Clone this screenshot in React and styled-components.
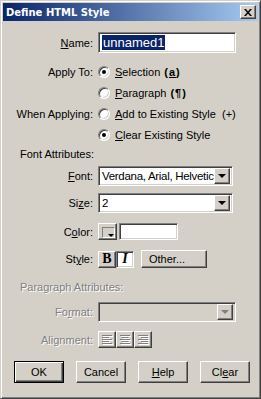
import styled, { createGlobalStyle, css } from "styled-components";

const GlobalStyle = createGlobalStyle`
  html, body {
    margin: 0;
    padding: 0;
    background: #d4d0c8;
  }
  * {
    box-sizing: border-box;
  }
`;

const sunken = css`
  border: 1px solid;
  border-color: #808080 #fff #fff #808080;
  box-shadow: inset 1px 1px 0 #404040, inset -1px -1px 0 #d4d0c8;
`;

const raised = css`
  border: 1px solid;
  border-color: #fff #404040 #404040 #fff;
  box-shadow: inset -1px -1px 0 #808080, inset 1px 1px 0 #d4d0c8;
`;

const Window = styled.div`
  width: 261px;
  height: 399px;
  background: #d4d0c8;
  border: 1px solid;
  border-color: #d4d0c8 #404040 #404040 #d4d0c8;
  box-shadow: inset 1px 1px 0 #fff, inset -1px -1px 0 #808080;
  padding: 2px;
  display: flex;
  flex-direction: column;
  font-family: "Liberation Sans", Arial, sans-serif;
  font-size: 11px;
  color: #000;
`;

const TitleBar = styled.div`
  height: 18px;
  flex-shrink: 0;
  display: flex;
  align-items: center;
  justify-content: space-between;
  padding: 0 2px 0 3px;
  background: linear-gradient(90deg, #0a246a, #a6caf0);
`;

const Title = styled.span`
  color: #fff;
  font-family: "DejaVu Sans", Verdana, sans-serif;
  font-weight: bold;
  font-size: 10px;
`;

const CloseButton = styled.div`
  ${raised};
  width: 16px;
  height: 14px;
  background: #d4d0c8;
  display: flex;
  align-items: center;
  justify-content: center;
`;

const Content = styled.div`
  display: flex;
  flex-direction: column;
`;

const Row = styled.div`
  display: flex;
  align-items: center;
  height: ${(p) => p.$h}px;
  margin-top: ${(p) => p.$top}px;
`;

const Label = styled.div`
  width: 95px;
  padding-right: 5px;
  text-align: right;
  flex-shrink: 0;
  white-space: nowrap;
  color: ${(p) => (p.$disabled ? "#808080" : "#000")};
  text-shadow: ${(p) => (p.$disabled ? "1px 1px 0 #fff" : "none")};
`;

const Heading = styled.div`
  padding-left: 17px;
  white-space: nowrap;
  color: ${(p) => (p.$disabled ? "#808080" : "#000")};
  text-shadow: ${(p) => (p.$disabled ? "1px 1px 0 #fff" : "none")};
`;

const TextField = styled.div`
  ${sunken};
  width: ${(p) => p.$w}px;
  height: ${(p) => p.$h}px;
  margin-left: ${(p) => p.$gap || 0}px;
  background: #fff;
  display: flex;
  align-items: center;
  padding-left: 3px;
`;

const Selected = styled.span`
  background: #0a246a;
  color: #fff;
  font-size: 13px;
  line-height: 15px;
  padding: 0 1px;
`;

const Select = styled.div`
  ${sunken};
  width: ${(p) => p.$w}px;
  height: 20px;
  background: ${(p) => (p.$disabled ? "#d4d0c8" : "#fff")};
  display: flex;
  align-items: center;
  justify-content: space-between;
  padding: 2px;
  font-size: 11.5px;
  letter-spacing: -0.3px;
`;

const SelectText = styled.span`
  padding-left: 1px;
  white-space: nowrap;
  overflow: hidden;
`;

const ArrowButton = styled.div`
  ${raised};
  width: 16px;
  height: 16px;
  flex-shrink: 0;
  background: #d4d0c8;
  display: flex;
  align-items: center;
  justify-content: center;
`;

const Arrow = styled.div`
  width: 0;
  height: 0;
  border-left: 4px solid transparent;
  border-right: 4px solid transparent;
  border-top: 4px solid ${(p) => (p.$disabled ? "#808080" : "#000")};
`;

const RadioLine = styled.label`
  display: flex;
  align-items: center;
  gap: 5px;
  white-space: nowrap;
`;

const RadioCircle = styled.span`
  width: 12px;
  height: 12px;
  border-radius: 50%;
  border: 1px solid;
  border-color: #808080 #fff #fff #808080;
  box-shadow: inset 1px 1px 0 #404040, inset -1px -1px 0 #d4d0c8;
  background: #fff;
  display: flex;
  align-items: center;
  justify-content: center;
  &::after {
    content: "";
    width: 4px;
    height: 4px;
    border-radius: 50%;
    background: ${(p) => (p.$checked ? "#000" : "transparent")};
  }
`;

const Symbol = styled.b`
  font-weight: bold;
  margin-left: 4px;
  letter-spacing: 1px;
`;

const Indent = styled.div`
  width: 95px;
  flex-shrink: 0;
`;

const ColorSwatch = styled.div`
  ${raised};
  width: 19px;
  height: 17px;
  background: #d4d0c8;
  position: relative;
  padding: 3px;
  &::before {
    content: "";
    display: block;
    width: 11px;
    height: 9px;
    border: 1px solid #808080;
    border-right-color: #fff;
    border-bottom-color: #fff;
    background: #d4d0c8;
  }
  &::after {
    content: "";
    position: absolute;
    right: 2px;
    bottom: 2px;
    border-left: 3px solid transparent;
    border-right: 3px solid transparent;
    border-top: 3px solid #000;
  }
`;

const ToolButton = styled.div`
  ${(p) => (p.$pressed ? sunken : raised)};
  width: 18px;
  height: 17px;
  background: ${(p) => (p.$pressed ? "#fff" : "#d4d0c8")};
  display: flex;
  align-items: center;
  justify-content: center;
  font-family: "Liberation Serif", "Times New Roman", serif;
  font-weight: bold;
  font-size: 14px;
  font-style: ${(p) => (p.$italic ? "italic" : "normal")};
`;

const OtherButton = styled.div`
  ${raised};
  width: 66px;
  height: 18px;
  margin-left: 7px;
  background: #d4d0c8;
  display: flex;
  align-items: center;
  padding-left: 7px;
`;

const AlignGroup = styled.div`
  display: flex;
`;

const ButtonRow = styled.div`
  display: flex;
  gap: 12px;
  padding-left: 11px;
  margin-top: 13px;
`;

const DialogButton = styled.div`
  ${raised};
  width: 50px;
  height: 22px;
  background: #d4d0c8;
  display: flex;
  align-items: center;
  justify-content: center;
  ${(p) =>
    p.$default &&
    css`
      border-color: #000;
      box-shadow: inset 1px 1px 0 #fff, inset -1px -1px 0 #404040,
        inset -2px -2px 0 #808080;
    `}
`;

const AlignIcon = ({ kind }) => {
  const lines = [
    [0, 10],
    [1, 7],
    [2, 10],
    [3, 7],
    [4, 10],
  ];
  return (
    <svg width="11" height="10" viewBox="0 0 11 10">
      {lines.map(([i, len]) => {
        let x = 0;
        if (kind === "center") x = (10 - len) / 2;
        if (kind === "right") x = 10 - len;
        return (
          <g key={i}>
            <rect x={x + 1} y={i * 2 + 1} width={len} height="1" fill="#fff" />
            <rect x={x} y={i * 2} width={len} height="1" fill="#808080" />
          </g>
        );
      })}
    </svg>
  );
};

const App = () => {
  return (
    <>
      <GlobalStyle />
      <Window>
        <TitleBar>
          <Title>Define HTML Style</Title>
          <CloseButton>
            <svg width="8" height="7" viewBox="0 0 8 7">
              <path
                d="M0 0h2l2 2.5L6 0h2L5 3.5 8 7H6L4 4.5 2 7H0l3-3.5z"
                fill="#000"
              />
            </svg>
          </CloseButton>
        </TitleBar>
        <Content>
          <Row $h={21} $top={11}>
            <Label>
              <u>N</u>ame:
            </Label>
            <TextField $w={138} $h={21}>
              <Selected>unnamed1</Selected>
            </TextField>
          </Row>
          <Row $h={21} $top={8}>
            <Label>Apply To:</Label>
            <RadioLine>
              <RadioCircle $checked />
              <span>
                <u>S</u>election
                <Symbol>
                  (<u>a</u>)
                </Symbol>
              </span>
            </RadioLine>
          </Row>
          <Row $h={21} $top={0}>
            <Indent />
            <RadioLine>
              <RadioCircle />
              <span>
                <u>P</u>aragraph
                <Symbol>(¶)</Symbol>
              </span>
            </RadioLine>
          </Row>
          <Row $h={21} $top={0}>
            <Label>When Applying:</Label>
            <RadioLine>
              <RadioCircle />
              <span>
                <u>A</u>dd to Existing Style&nbsp; (+)
              </span>
            </RadioLine>
          </Row>
          <Row $h={21} $top={0}>
            <Indent />
            <RadioLine>
              <RadioCircle $checked />
              <span>
                <u>C</u>lear Existing Style
              </span>
            </RadioLine>
          </Row>
          <Row $h={18} $top={0}>
            <Heading>Font Attributes:</Heading>
          </Row>
          <Row $h={20} $top={3}>
            <Label>
              <u>F</u>ont:
            </Label>
            <Select $w={135}>
              <SelectText>Verdana, Arial, Helvetic</SelectText>
              <ArrowButton>
                <Arrow />
              </ArrowButton>
            </Select>
          </Row>
          <Row $h={20} $top={7}>
            <Label>
              Si<u>z</u>e:
            </Label>
            <Select $w={135}>
              <SelectText>2</SelectText>
              <ArrowButton>
                <Arrow />
              </ArrowButton>
            </Select>
          </Row>
          <Row $h={17} $top={10}>
            <Label>
              C<u>o</u>lor:
            </Label>
            <ColorSwatch />
            <TextField $w={59} $h={17} $gap={2} />
          </Row>
          <Row $h={18} $top={10}>
            <Label>
              St<u>y</u>le:
            </Label>
            <ToolButton>B</ToolButton>
            <ToolButton $pressed $italic>
              I
            </ToolButton>
            <OtherButton>Other...</OtherButton>
          </Row>
          <Row $h={18} $top={10}>
            <Heading $disabled>Paragraph Attributes:</Heading>
          </Row>
          <Row $h={20} $top={6}>
            <Label $disabled>
              Fo<u>r</u>mat:
            </Label>
            <Select $w={138} $disabled>
              <span />
              <ArrowButton>
                <Arrow $disabled />
              </ArrowButton>
            </Select>
          </Row>
          <Row $h={17} $top={9}>
            <Label $disabled>
              Ali<u>g</u>nment:
            </Label>
            <AlignGroup>
              <ToolButton>
                <AlignIcon kind="left" />
              </ToolButton>
              <ToolButton>
                <AlignIcon kind="center" />
              </ToolButton>
              <ToolButton>
                <AlignIcon kind="right" />
              </ToolButton>
            </AlignGroup>
          </Row>
          <ButtonRow>
            <DialogButton $default>OK</DialogButton>
            <DialogButton>Cancel</DialogButton>
            <DialogButton>
              <span>
                <u>H</u>elp
              </span>
            </DialogButton>
            <DialogButton>
              <span>
                Cl<u>e</u>ar
              </span>
            </DialogButton>
          </ButtonRow>
        </Content>
      </Window>
    </>
  );
};

export default App;
